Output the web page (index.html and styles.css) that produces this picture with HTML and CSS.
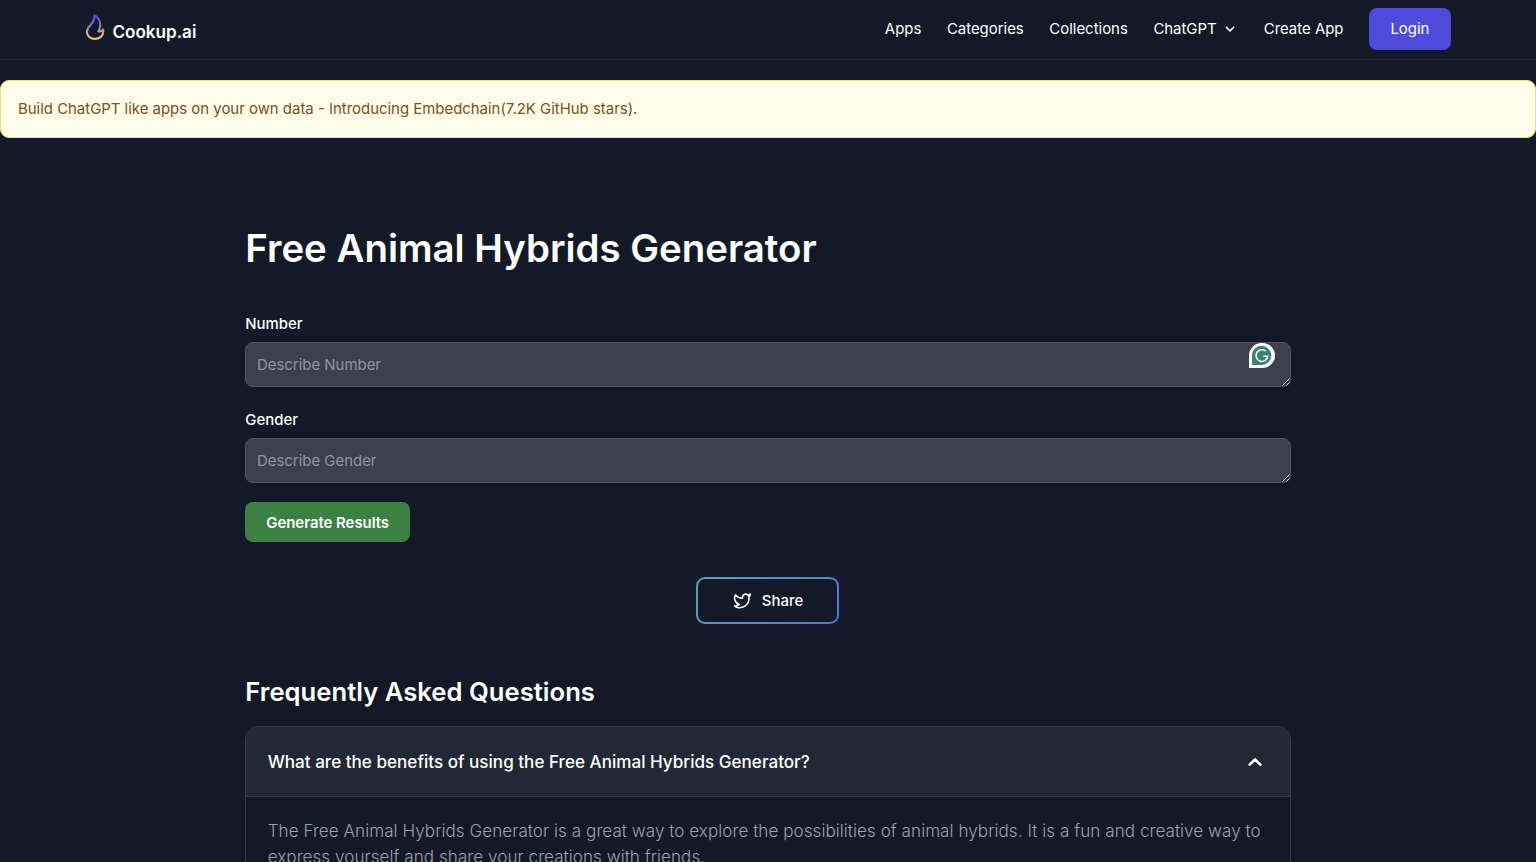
FILE: index.html
```html
<!DOCTYPE html>
<html lang="en">
<head>
    <meta charset="UTF-8">
    <meta name="viewport" content="width=device-width, initial-scale=1.0">
    <title>Free Animal Hybrids Generator | Cookup.ai</title>
    <link rel="stylesheet" href="styles.css">
</head>
<body>
<header class="navbar">
    <a href="#" class="brand">
        <svg class="brand-icon" viewBox="0 0 20 28" fill="none">
            <defs>
                <linearGradient id="flame" x1="0" y1="0" x2="0" y2="1">
                    <stop offset="0" stop-color="#4f46e5"/>
                    <stop offset="0.3" stop-color="#7468c4"/>
                    <stop offset="0.6" stop-color="#b08f9c"/>
                    <stop offset="0.85" stop-color="#edb98a"/>
                </linearGradient>
            </defs>
            <path d="M9.500 2C9.800 6.500 8 9.300 5.500 12C3.200 14.400 1.900 16.200 1.900 19C1.900 23 5.500 25.900 10 25.900C14.700 25.900 18.200 22.800 18.200 18.800V16.300C17 18 15.500 18.800 13.300 18.500C14.800 16.300 15.500 13.800 15.200 11C14.800 7 12.800 4.200 9.500 2Z" stroke="url(#flame)" stroke-width="2.100" stroke-linejoin="round"/>
        </svg>
        <span class="brand-name">Cookup.ai</span>
    </a>
    <nav class="menu">
        <a href="#">Apps</a>
        <a href="#">Categories</a>
        <a href="#">Collections</a>
        <a href="#" class="dropdown">ChatGPT
            <svg class="chevron" viewBox="0 0 10 10" fill="none" stroke="currentColor" stroke-width="1.6" stroke-linecap="round" stroke-linejoin="round"><path d="M1.300 3.200L5 6.900L8.700 3.200"/></svg>
        </a>
        <a href="#">Create App</a>
        <a href="#" class="login">Login</a>
    </nav>
</header>

<div class="banner">Build ChatGPT like apps on your own data - Introducing Embedchain(7.2K GitHub stars).</div>

<main class="container">
    <h1>Free Animal Hybrids Generator</h1>

    <form class="form">
        <label for="number">Number</label>
        <div class="field">
            <textarea id="number" rows="1" placeholder="Describe Number"></textarea>
            <svg class="badge" viewBox="0 0 26 25" fill="none">
                <path d="M0 25V12.500A12.500 12.500 0 0 1 12.500 0H13.500A12.500 12.500 0 0 1 13.500 25Z" fill="#fff"/>
                <path d="M3 22V12.300A9.600 9.600 0 1 1 13 22Z" fill="#3d8270"/>
                <path d="M16.700 8A5.900 5.900 0 1 0 18.800 13.200H14.200" stroke="#fff" stroke-width="1.500"/>
            </svg>
            <svg class="grip" viewBox="0 0 8 8" stroke="#c5c8d0" stroke-width="1"><path d="M0.500 7.500L7.500 0.500M4.500 7.500L7.500 4.500"/></svg>
        </div>
        <label for="gender">Gender</label>
        <div class="field">
            <textarea id="gender" rows="1" placeholder="Describe Gender"></textarea>
            <svg class="grip" viewBox="0 0 8 8" stroke="#c5c8d0" stroke-width="1"><path d="M0.500 7.500L7.500 0.500M4.500 7.500L7.500 4.500"/></svg>
        </div>
        <button type="button" class="generate">Generate Results</button>
    </form>

    <a href="#" class="share">
        <svg class="share-icon" viewBox="0 0 24 24" fill="none" stroke="currentColor" stroke-width="2" stroke-linecap="round" stroke-linejoin="round"><path d="M22 4s-.7 2.100-2 3.400c1.600 10-9.400 17.300-18 11.600 2.200.1 4.400-.6 6-2C3 15.500.5 9.600 3 5c2.200 2.600 5.600 4.100 9 4-.9-4.200 4-6.600 7-3.800 1.100 0 3-1.200 3-1.200z"/></svg>
        <span>Share</span>
    </a>

    <section class="faq">
        <h2>Frequently Asked Questions</h2>
        <div class="accordion">
            <button type="button" class="question">
                <span>What are the benefits of using the Free Animal Hybrids Generator?</span>
                <svg class="arrow" viewBox="0 0 16 10" fill="none" stroke="currentColor" stroke-width="2.600" stroke-linecap="round" stroke-linejoin="round"><path d="M2.700 7.700L8 2.400L13.300 7.700"/></svg>
            </button>
            <p class="answer">The Free Animal Hybrids Generator is a great way to explore the possibilities of animal hybrids. It is a fun and creative way to express yourself and share your creations with friends.</p>
        </div>
    </section>
</main>
</body>
</html>
```
FILE: styles.css
```css
:root {
    --bg: #131926;
    --panel: #222835;
    --line: #353c49;
    --field: #3c4150;
    --indigo: #4e4bdb;
    --green: #3d8044;
}

* {
    box-sizing: border-box;
}

body {
    margin: 0;
    height: 100vh;
    overflow: hidden;
    background-color: var(--bg);
    color: #fff;
    font-family: Inter, sans-serif;
    font-size: 14.93px;
    line-height: 21px;
}

a {
    color: inherit;
    text-decoration: none;
}

.navbar {
    display: flex;
    justify-content: space-between;
    align-items: center;
    height: 60px;
    padding: 0 85.33px 1px 84.5px;
    border-bottom: 1px solid #202633;
}

.brand {
    display: flex;
    align-items: center;
    gap: 8px;
}

.brand-icon {
    width: 20px;
    height: 28px;
    margin-top: -4px;
}

.brand-name {
    font-size: 17.07px;
    font-weight: 600;
    margin-top: 5px;
}

.menu {
    display: flex;
    align-items: center;
    gap: 25.6px;
}

.menu a {
    padding-top: 1px;
}

.dropdown {
    display: flex;
    align-items: center;
    gap: 8px;
    margin-right: 3.5px;
}

.chevron {
    width: 10px;
    height: 10px;
    margin-top: -1px;
}

.menu .login {
    padding: 11px 21.33px 10px;
    border-radius: 8px;
    background-color: var(--indigo);
}

.banner {
    margin-top: 20px;
    padding: 17px;
    height: 58px;
    line-height: 23px;
    border: 1px solid #f3e27a;
    border-radius: 9px;
    background-color: #fefdea;
    color: #7a4f23;
}

.container {
    width: 1045.33px;
    margin: 0 auto;
    padding-top: 89px;
    display: flex;
    flex-direction: column;
}

h1 {
    margin: 0;
    font-size: 38.4px;
    line-height: 43px;
    font-weight: 600;
}

.form {
    margin-top: 44px;
}

label {
    display: block;
    margin-bottom: 7px;
    font-weight: 500;
}

.field {
    position: relative;
    height: 45px;
    margin-bottom: 23px;
}

textarea {
    display: block;
    width: 100%;
    height: 45px;
    padding: 11.5px 10.67px 0;
    border: 1px solid #4f5462;
    border-radius: 8px;
    background-color: var(--field);
    color: #fff;
    font: inherit;
    resize: none;
    overflow: hidden;
}

textarea::placeholder {
    color: #9095a3;
}

.badge {
    position: absolute;
    top: 1px;
    right: 16px;
    width: 26px;
    height: 25px;
}

.grip {
    position: absolute;
    right: 1px;
    bottom: 1px;
    width: 8px;
    height: 8px;
}

.generate {
    display: block;
    height: 40px;
    margin-top: -4px;
    padding: 2px 21px 0;
    border: 0;
    border-radius: 8px;
    background-color: var(--green);
    color: #fff;
    font: inherit;
    font-weight: 600;
    letter-spacing: -0.03px;
}

.share {
    display: flex;
    align-items: center;
    justify-content: center;
    align-self: center;
    gap: 10px;
    width: 143px;
    height: 47px;
    margin-top: 35px;
    border: 2px solid transparent;
    border-radius: 9px;
    background: linear-gradient(var(--bg), var(--bg)) padding-box,
        linear-gradient(135deg, #4fa3b8, #4f8fd6 50%, #4f74d6) border-box;
    font-weight: 500;
}

.share span {
    margin-top: 2px;
}

.share-icon {
    width: 19px;
    height: 19px;
}

.faq {
    margin-top: 51px;
}

h2 {
    margin: 0 0 17px;
    font-size: 25.6px;
    line-height: 34px;
    font-weight: 600;
    letter-spacing: 0.03px;
}

.accordion {
    border: 1px solid var(--line);
    border-radius: 13px;
    overflow: hidden;
}

.question {
    display: flex;
    align-items: center;
    justify-content: space-between;
    width: 100%;
    height: 70px;
    padding: 0 27px 0 21.33px;
    border: 0;
    border-bottom: 1px solid var(--line);
    background-color: var(--panel);
    color: #fff;
    font: inherit;
    font-size: 17.07px;
    font-weight: 500;
    letter-spacing: 0.015px;
}

.arrow {
    width: 16px;
    height: 10px;
}

.answer {
    margin: 0;
    padding: 21.33px;
    color: #9ca1ad;
    font-size: 17.07px;
    font-weight: 300;
    letter-spacing: 0.05px;
    line-height: 25.6px;
}
```
